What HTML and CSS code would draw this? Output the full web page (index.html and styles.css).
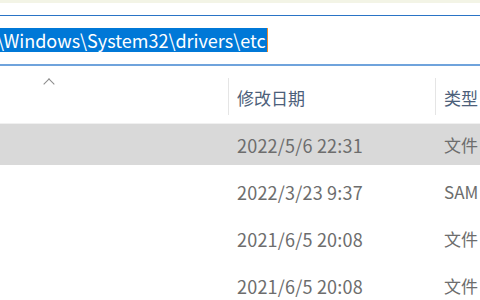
FILE: index.html
```html
<!DOCTYPE html>
<html lang="zh-CN">

<head>
    <meta charset="UTF-8">
    <meta name="viewport" content="width=device-width, initial-scale=1.0">
    <title>etc</title>
    <link rel="stylesheet" href="styles.css">
</head>

<body>
    <div class="top_strip"></div>

    <div class="address_bar">
        <span class="address_text">\Windows\System32\drivers\etc</span><span class="caret"></span>
    </div>

    <div class="file_list">
        <div class="list_head">
            <div class="col col_name"><span class="sort_arrow"></span></div>
            <div class="col col_date">修改日期</div>
            <div class="col col_type">类型</div>
        </div>
        <!-- // .list_head -->

        <div class="row row_selected">
            <div class="col col_name"></div>
            <div class="col col_date">2022/5/6 22:31</div>
            <div class="col col_type">文件</div>
        </div>
        <div class="row">
            <div class="col col_name"></div>
            <div class="col col_date">2022/3/23 9:37</div>
            <div class="col col_type">SAM</div>
        </div>
        <div class="row">
            <div class="col col_name"></div>
            <div class="col col_date">2021/6/5 20:08</div>
            <div class="col col_type">文件</div>
        </div>
        <div class="row">
            <div class="col col_name"></div>
            <div class="col col_date">2021/6/5 20:08</div>
            <div class="col col_type">文件</div>
        </div>
    </div>
    <!-- // .file_list -->
</body>

</html>
```

FILE: styles.css
```css
html,
body {
    box-sizing: border-box;
    padding: 0;
    margin: 0;
    background: #fff;
    overflow: hidden;
    font-family: "Noto Sans CJK SC", "Noto Sans", sans-serif;
}

*,
*:before,
*:after {
    box-sizing: inherit;
}

.top_strip {
    height: 3px;
    background: #f3f4e6;
}

/* address bar */
.address_bar {
    display: flex;
    align-items: center;
    height: 51px;
    margin-top: 12px;
    overflow: hidden;
    border-top: 1px solid #2a74c6;
    border-bottom: 2px solid #6fa3dc;
    white-space: nowrap;
}

.address_text {
    display: inline-block;
    height: 24px;
    margin-left: -3px;
    padding-right: 1px;
    line-height: 24px;
    font-size: 18px;
    color: #fff;
    background: #0078d7;
}

.caret {
    display: inline-block;
    width: 1px;
    height: 24px;
    background: #f08a2c;
}

/* file list */
.list_head,
.row {
    display: grid;
    grid-template-columns: 228px 207px 1fr;
    white-space: nowrap;
}

.list_head {
    height: 58px;
    border-bottom: 1px solid #f0f0f0;
}

.list_head .col {
    position: relative;
    padding-top: 21px;
    line-height: 22px;
    font-size: 17px;
    color: #4c607a;
}

.list_head .col_date,
.list_head .col_type {
    margin-top: 12px;
    height: 37px;
    padding-top: 9px;
    border-left: 1px solid #e5e5e5;
}

.col_date,
.col_type {
    padding-left: 8px;
}

.sort_arrow {
    position: absolute;
    left: 45px;
    top: 14px;
    width: 8px;
    height: 8px;
    border-left: 1px solid #8a8a8a;
    border-top: 1px solid #8a8a8a;
    transform: rotate(45deg);
}

.row {
    height: 41px;
    margin-bottom: 6px;
    align-items: center;
    font-size: 18px;
    letter-spacing: 0.2px;
    color: #6d6d6d;
}

.row .col_date,
.row .col_type {
    padding-left: 9px;
}

.row .col_type {
    font-size: 17px;
    letter-spacing: 0;
}

.row_selected {
    background: #d9d9d9;
}
```
